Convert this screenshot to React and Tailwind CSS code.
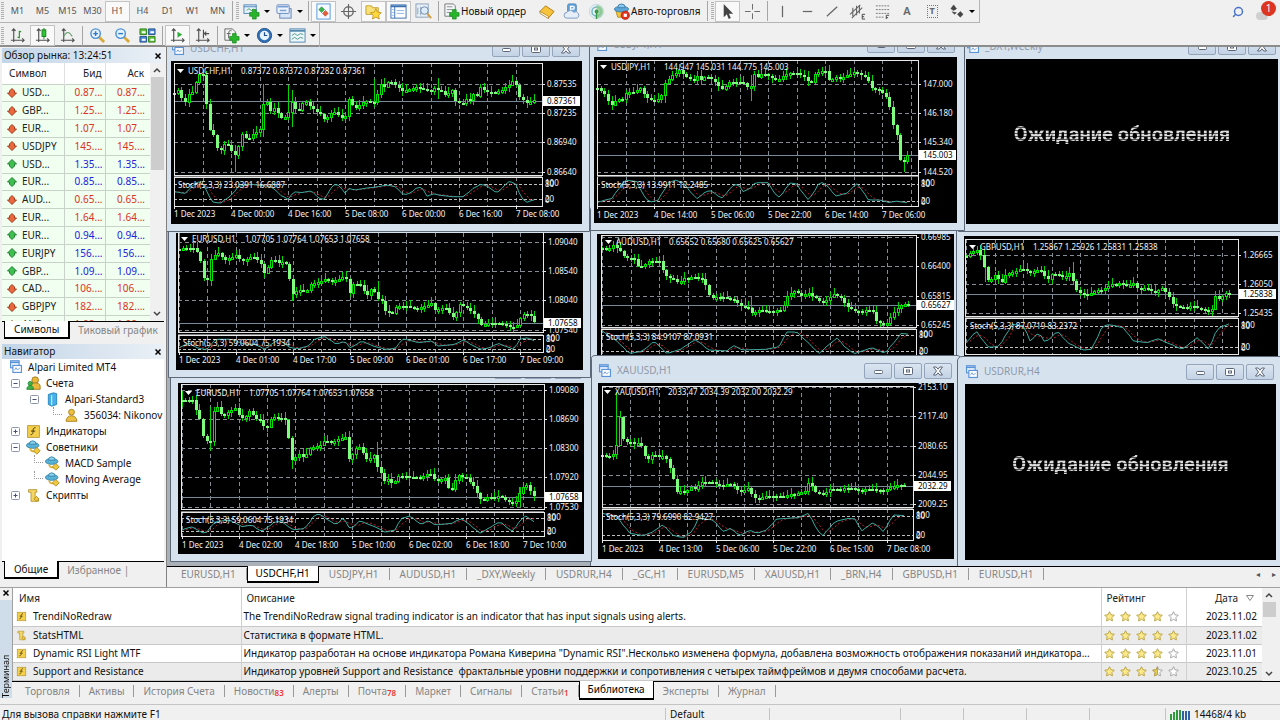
// App.jsx
import React from 'react'
import { Search } from 'lucide-react'

/* ------------------------------------------------------------------ */
/* Data                                                                */
/* ------------------------------------------------------------------ */

const QUOTES = [
  ['USD...', '0.87...', '0.87...', false],
  ['GBP...', '1.25...', '1.25...', false],
  ['EUR...', '1.07...', '1.07...', false],
  ['USDJPY', '145....', '145....', false],
  ['USD...', '1.35...', '1.35...', true],
  ['EUR...', '0.85...', '0.85...', true],
  ['AUD...', '0.65...', '0.65...', false],
  ['EUR...', '1.64...', '1.64...', false],
  ['EUR...', '0.94...', '0.94...', true],
  ['EURJPY', '156....', '156....', true],
  ['GBP...', '1.09...', '1.09...', true],
  ['CAD...', '106....', '106....', false],
  ['GBPJPY', '182....', '182....', false],
  ['AUD...', '1.08...', '1.08...', false],
]

// Chart geometry is stored in plot units: px = (unit - origin) / scale, per axis
const USDCHF = {
  scale: [3, 3], origin: [18, 63], plot: [28, 70, 1130, 405], sub: [410, 497],
  x0: 28, step: 85.4, grid: [[132, '0.87535'], [219, '0.87235'], [307, '0.86940'], [395, '0.86640']],
  price: [182, '0.87361'], levels: [431, 478],
  title: [68, 92, 'USDCHF,H1', '0.87372 0.87372 0.87282 0.87361'],
  stochText: [40, 434, 'Stoch(5,3,3) 23.0391 16.6887'],
  dateY: 521, dates: ['1 Dec 2023', '4 Dec 00:00', '4 Dec 16:00', '5 Dec 08:00', '6 Dec 00:00', '6 Dec 16:00', '7 Dec 08:00'],
  path: '28,160 40,150 50,175 60,185 72,160 85,155 95,115 105,100 115,105 122,120 125,225 135,270 150,290 160,345 175,310 190,315 200,335 210,345 215,365 222,300 232,280 245,300 260,285 275,275 290,262 298,145 305,185 315,215 330,200 345,235 355,235 370,215 378,180 390,205 400,212 412,190 425,185 440,205 455,215 470,225 480,245 492,222 505,215 520,225 535,238 545,220 552,170 562,195 572,205 585,195 600,180 612,185 625,195 630,135 640,175 650,115 660,150 670,120 685,130 700,145 715,155 730,147 755,142 775,148 800,155 805,135 815,170 820,135 835,165 850,160 862,150 872,185 885,190 900,190 905,170 915,180 925,160 935,170 945,140 965,155 990,158 1010,150 1030,135 1045,122 1055,140 1065,175 1080,185 1090,195 1100,180 1110,182',
  spikes: [[210, 320, 395], [295, 132, 290], [370, 135, 225], [380, 150, 260], [627, 118, 200], [820, 115, 178]],
  stoch: '28,455 60,460 90,430 105,425 120,440 140,485 165,490 200,465 220,440 250,432 320,440 345,465 370,478 385,455 410,458 440,452 460,475 480,478 500,440 515,430 540,460 550,445 570,450 600,445 640,440 665,435 690,440 715,465 735,460 760,440 780,450 788,475 800,460 820,465 860,470 895,470 925,445 950,432 970,440 995,460 1015,440 1035,422 1055,435 1070,475 1085,487 1110,478',
}

const USDJPY = {
  scale: [3, 3], origin: [12, 51], plot: [22, 60, 983, 405], sub: [408, 499],
  x0: 22, step: 85.5, grid: [[132, '147.000'], [219, '146.180'], [307, '145.340'], [395, '144.520']],
  price: [345, '145.003'], levels: [431, 482],
  title: [63, 81, 'USDJPY,H1', '144.947 145.031 144.775 145.003'],
  stochText: [34, 434, 'Stoch(5,3,3) 13.9911 12.2485'],
  dateY: 524, dates: ['1 Dec 2023', '4 Dec 14:00', '5 Dec 06:00', '5 Dec 22:00', '6 Dec 14:00', '7 Dec 06:00'],
  path: '22,145 35,155 50,165 58,200 70,190 80,175 95,180 108,158 125,157 140,150 148,140 160,160 175,178 190,182 205,175 215,165 225,130 240,110 255,100 268,90 280,105 295,115 310,120 320,100 325,130 335,115 350,108 365,118 378,130 390,145 402,150 412,125 430,125 450,125 462,130 465,155 475,130 482,140 490,100 500,115 515,100 530,105 545,115 558,122 575,110 595,98 620,100 640,110 655,125 660,138 668,105 685,95 705,90 718,125 735,112 755,115 770,105 795,95 815,105 830,115 845,145 860,148 875,155 890,175 900,205 910,260 918,275 922,300 930,360 940,365 952,345',
  spikes: [[226, 120, 188], [482, 105, 182], [941, 350, 395]],
  stoch: '22,487 65,475 90,440 108,420 140,425 165,475 185,487 205,480 235,430 255,420 285,430 300,455 320,477 340,460 360,450 395,475 430,435 445,433 460,455 480,445 495,428 535,428 550,455 568,472 600,428 620,432 655,482 690,425 710,435 738,468 775,458 800,428 835,480 870,480 900,488 915,483 950,488',
}

const EURUSD_A = {
  scale: [3, 3], origin: [33, 21], plot: [40, 0, 1133, 318], sub: [328, 378],
  x0: 42, step: 85.3, grid: [[48, '1.09040'], [136, '1.08540'], [223, '1.08040'], [312, '1.07540']],
  price: [291, '1.07658'], levels: [340, 369],
  title: [82, 39, 'EURUSD,H1', '1.07705 1.07764 1.07653 1.07658'],
  stochText: [54, 351, 'Stoch(5,3,3) 59.0604 75.1934'],
  dateY: 403, dates: ['1 Dec 2023', '4 Dec 01:00', '4 Dec 17:00', '5 Dec 09:00', '6 Dec 01:00', '6 Dec 17:00', '7 Dec 09:00'],
  path: '43,68 60,65 90,65 105,100 115,155 130,165 138,100 150,85 165,80 175,105 195,95 215,85 228,108 245,100 262,90 285,110 298,140 310,120 322,98 340,110 360,108 370,145 382,205 395,195 410,190 422,205 432,175 450,172 468,165 482,158 500,165 520,160 540,150 550,180 557,218 565,170 585,175 600,200 610,208 622,180 635,218 650,225 652,255 665,255 680,265 695,240 715,240 740,243 755,250 775,240 800,232 812,255 830,245 845,248 860,275 872,268 878,232 895,240 910,250 925,260 935,275 950,300 965,290 1000,290 1020,295 1040,305 1060,295 1068,270 1080,262 1095,265 1105,285 1112,290',
  spikes: [[43, 30, 72], [138, 85, 180], [382, 160, 225], [640, 165, 225]],
  stoch: '43,365 70,350 95,365 125,372 150,340 200,340 240,355 270,355 300,370 340,340 375,365 400,368 430,360 450,338 480,332 515,355 540,345 555,367 590,345 625,360 660,370 690,368 715,338 760,350 800,345 820,360 870,355 895,342 945,370 975,365 1000,352 1045,370 1065,340 1085,335 1110,345',
}

const EURUSD_B = {
  scale: [3, 3], origin: [39, 39], plot: [47, 43, 1136, 417], sub: [425, 497],
  x0: 50, step: 85.3, grid: [[59, '1.09080'], [148, '1.08690'], [235, '1.08300'], [322, '1.07920'], [411, '1.07530']],
  price: [382, '1.07658'], levels: [444, 483],
  title: [92, 68, 'EURUSD,H1', '1.07705 1.07764 1.07653 1.07658'],
  stochText: [62, 449, 'Stoch(5,3,3) 59.0604 75.1934'],
  dateY: 524, dates: ['1 Dec 2023', '4 Dec 02:00', '4 Dec 18:00', '5 Dec 10:00', '6 Dec 02:00', '6 Dec 18:00', '7 Dec 10:00'],
  path: '50,90 65,90 85,90 95,130 105,150 115,205 135,222 138,130 150,120 160,105 170,140 190,125 212,112 225,145 240,140 255,118 270,148 290,150 300,185 315,150 325,140 345,145 358,145 368,190 378,270 395,260 405,248 418,270 428,235 445,230 465,225 480,210 500,218 520,208 540,198 548,250 555,290 565,235 585,232 600,262 612,275 622,240 635,290 648,310 650,340 665,325 685,345 695,318 720,318 750,323 775,318 795,305 800,325 815,330 840,325 850,355 868,360 873,310 890,320 905,325 925,350 940,380 950,395 965,380 990,380 1005,375 1025,395 1045,395 1060,390 1065,355 1085,345 1100,370 1108,382',
  spikes: [[50, 62, 112], [136, 110, 242], [380, 205, 298], [637, 215, 305], [1064, 350, 410]],
  stoch: '50,480 80,470 120,492 150,455 195,450 230,470 260,465 290,485 330,455 350,455 385,480 420,475 445,440 460,430 490,450 515,465 535,440 555,480 585,452 640,475 660,487 690,480 710,445 735,438 770,465 790,450 810,465 860,460 890,445 945,490 1005,455 1040,485 1080,435 1105,455',
}

const AUDUSD = {
  scale: [2.27, 3], origin: [16, 24], plot: [25, 27, 740, 303], sub: [310, 410],
  x0: 28, step: 64.6, grid: [[33, '0.66985'], [120, '0.66400'], [209, '0.65815'], [297, '0.65245']],
  price: [238, '0.65627'], levels: [328, 376],
  title: [58, 48, 'AUDUSD,H1', '0.65652 0.65680 0.65625 0.65627'],
  stochText: [36, 334, 'Stoch(5,3,3) 84.9107 87.0931'],
  dates: [],
  path: '28,65 40,72 50,55 65,70 80,95 100,98 110,122 125,115 135,103 158,105 165,130 175,155 190,158 200,172 210,158 235,152 255,158 268,190 272,218 290,212 310,215 330,222 340,240 360,245 368,262 385,250 405,255 435,252 442,230 450,203 465,195 480,210 495,198 510,215 525,228 540,222 550,203 568,215 580,238 600,255 640,252 650,285 665,295 675,292 685,265 700,245 710,232 725,237',
  spikes: [[366, 213, 262]],
  stoch: '28,315 60,345 90,383 120,375 145,345 175,383 205,370 240,340 270,372 310,375 328,358 345,372 400,370 430,362 445,318 470,318 495,350 520,383 560,335 580,365 600,383 640,365 670,382 690,350 705,322 725,325',
}

const GBPUSD = {
  scale: [2.27, 3], origin: [850, 30], plot: [853, 40, 1472, 269], sub: [277, 385],
  x0: 855, step: 64.6, grid: [[87, '1.26665'], [174, '1.26050'], [262, '1.25435']],
  price: [204, '1.25838'], levels: [300, 364],
  title: [887, 63, 'GBPUSD,H1', '1.25867 1.25926 1.25831 1.25838'],
  stochText: [863, 299, 'Stoch(5,3,3) 87.0719 83.2372'],
  dates: [],
  path: '855,90 865,80 880,70 893,100 897,140 905,168 920,145 935,170 945,145 960,138 980,128 1000,138 1015,130 1030,138 1037,168 1050,140 1062,145 1078,155 1090,140 1100,175 1108,200 1130,208 1145,195 1165,190 1185,175 1205,170 1220,180 1235,172 1245,190 1260,185 1280,200 1300,185 1312,205 1325,238 1345,245 1370,240 1390,250 1410,258 1420,210 1432,225 1440,200 1455,202',
  spikes: [[897, 95, 168], [1098, 108, 178]],
  stoch: '855,350 878,315 905,365 930,360 960,295 985,300 1000,345 1020,320 1035,350 1062,315 1085,350 1120,372 1140,370 1165,300 1180,296 1212,305 1235,345 1265,350 1290,338 1345,370 1380,335 1405,370 1425,308 1455,292',
}

const XAUUSD = {
  scale: [3, 3], origin: [24, 84], plot: [35, 92, 970, 457], sub: [463, 556],
  x0: 36, step: 85.4, grid: [[96, '2153.10'], [184, '2117.40'], [272, '2080.65'], [360, '2044.95'], [448, '2009.25']],
  price: [392, '2032.29'], levels: [482, 540],
  title: [75, 112, 'XAUUSD,H1', '2033.47 2034.39 2032.00 2032.29'],
  stochText: [47, 486, 'Stoch(5,3,3) 79.6990 82.9427'],
  dateY: 582, dates: ['1 Dec 2023', '4 Dec 13:00', '5 Dec 06:00', '5 Dec 22:00', '6 Dec 15:00', '7 Dec 08:00'],
  path: '36,300 50,305 65,298 78,290 82,180 90,185 92,235 105,262 120,260 135,268 150,262 160,290 168,318 180,305 190,295 205,305 225,300 235,335 248,345 252,415 265,408 290,408 300,395 315,402 325,390 335,380 355,382 375,382 380,392 400,390 425,385 440,405 455,410 478,395 487,425 500,432 520,425 550,422 580,422 620,415 645,408 655,385 668,395 678,415 705,415 720,400 740,402 760,400 790,400 805,405 830,402 855,404 885,405 900,397 920,390 945,390',
  spikes: [[79, 110, 300], [495, 405, 445]],
  stoch: '36,475 80,485 120,535 160,542 190,530 220,508 245,540 280,548 305,530 325,490 370,495 400,530 420,520 450,542 480,525 500,535 530,525 560,492 625,488 655,475 695,545 735,500 775,490 795,492 815,528 850,502 880,530 910,480 945,482',
}

// Stacking order: last one is on top
const WINDOWS = [
  { title: 'AUDUSD,H1', chart: AUDUSD, place: 'left-[422px] top-[159px] w-[373px] h-[200px]' },
  { title: 'GBPUSD,H1', chart: GBPUSD, place: 'left-[789px] top-[161px] w-[330px] h-[160px]' },
  { title: '_DXY,Weekly', place: 'left-[791px] top-[-16px] w-[328px] h-[201px]' },
  { title: 'USDJPY,H1', chart: USDJPY, place: 'left-[419px] top-[-18px] w-[379px] h-[202px]' },
  { title: 'XAUUSD,H1', chart: XAUUSD, place: 'left-[423px] top-[308px] w-[372px] h-[212px]' },
  { title: 'USDRUR,H4', place: 'left-[790px] top-[309px] w-[327px] h-[212px]' },
  { title: 'EURUSD,H1', chart: EURUSD_B, place: 'left-[3px] top-[308px] w-[422px] h-[207px]' },
  { title: 'EURUSD,H1', chart: EURUSD_A, place: 'left-[1px] top-[158px] w-[423px] h-[173px]' },
  { title: 'USDCHF,H1', chart: USDCHF, place: 'left-[-4px] top-[-14px] w-[427px] h-[199px]' },
]

const CHART_TABS = ['EURUSD,H1', 'USDCHF,H1', 'USDJPY,H1', 'AUDUSD,H1', '_DXY,Weekly', 'USDRUR,H4', '_GC,H1', 'EURUSD,M5', 'XAUUSD,H1', '_BRN,H4', 'GBPUSD,H1', 'EURUSD,H1']

const LIBRARY = [
  ['TrendiNoRedraw', 'The TrendiNoRedraw signal trading indicator is an indicator that has input signals using alerts.', 4, '2023.11.02', 'fx'],
  ['StatsHTML', 'Статистика в формате HTML.', 5, '2023.11.02', 'script'],
  ['Dynamic RSI Light MTF', 'Индикатор разработан на основе индикатора Романа Киверина "Dynamic RSI".Несколько изменена формула, добавлена возможность отображения показаний индикатора...', 4, '2023.11.01', 'fx'],
  ['Support and Resistance', 'Индикатор уровней Support and Resistance  фрактальные уровни поддержки и сопротивления с четырех таймфреймов и двумя способами расчета.', 3.5, '2023.10.25', 'fx'],
]

const TERMINAL_TABS = [
  ['Торговля'], ['Активы'], ['История Счета'], ['Новости', '83'], ['Алерты'], ['Почта', '78'], ['Маркет'],
  ['Сигналы'], ['Статьи', '1'], ['Библиотека'], ['Эксперты'], ['Журнал'],
]

/* ------------------------------------------------------------------ */
/* Charts                                                              */
/* ------------------------------------------------------------------ */

const parse = (s) => s.split(' ').map((p) => p.split(',').map(Number))

function valueAt(pts, x) {
  if (x <= pts[0][0]) return pts[0][1]
  for (let i = 1; i < pts.length; i++) {
    if (x <= pts[i][0]) {
      const [x1, y1] = pts[i - 1]
      const [x2, y2] = pts[i]
      return y1 + ((y2 - y1) * (x - x1)) / (x2 - x1)
    }
  }
  return pts[pts.length - 1][1]
}

function Chart({ c }) {
  const X = (v) => Math.round((v - c.origin[0]) / c.scale[0])
  const Y = (v) => Math.round((v - c.origin[1]) / c.scale[1])
  const [l, t, r, b] = [X(c.plot[0]), Y(c.plot[1]), X(c.plot[2]), Y(c.plot[3])]
  const [st, sb] = [Y(c.sub[0]), Y(c.sub[1])]

  // Vertical grid
  const cols = []
  for (let x = c.x0; x < c.plot[2] - 4; x += c.step) cols.push(X(x))

  // Candles, eight to a grid column
  const pts = parse(c.path)
  const last = pts[pts.length - 1][0]
  let wicks = ''
  let up = ''
  let down = ''
  let prev = Y(pts[0][1])
  let n = 0
  for (let x = c.x0; x <= last; x += c.step / 8) {
    const close = Y(valueAt(pts, x))
    const hi = Math.min(prev, close) - 1 - ((n * 7) % 6)
    const lo = Math.max(prev, close) + 1 + ((n * 11) % 5)
    const px = X(x)
    wicks += `M${px + 0.5} ${Math.max(hi, t + 1)}V${Math.min(lo, b)}`
    const top = Math.min(prev, close)
    const h = Math.max(2, Math.abs(prev - close))
    if (close < prev) up += `M${px - 0.5} ${top + 0.5}h2v${h}h-2z`
    else down += `M${px - 1} ${top}h3v${h}h-3z`
    prev = close
    n++
  }
  c.spikes.forEach(([x, y1, y2]) => {
    wicks += `M${X(x) + 0.5} ${Y(y1)}V${Y(y2)}`
  })

  // Stochastic: %K solid, %D lags behind it
  const st1 = parse(c.stoch)
  const kLine = []
  const dLine = []
  for (let x = c.x0; x <= last; x += c.step / 8) {
    kLine.push(`${X(x)},${((valueAt(st1, x) - c.origin[1]) / c.scale[1]).toFixed(1)}`)
    const avg = (valueAt(st1, x) + valueAt(st1, x - c.step / 8) + valueAt(st1, x - c.step / 3)) / 3
    dLine.push(`${X(x)},${((avg - c.origin[1]) / c.scale[1]).toFixed(1)}`)
  }

  const priceY = Y(c.price[0])

  return (
    <svg className="block h-full w-full font-['Noto_Sans',sans-serif] text-[8px]" fill="none" shapeRendering="crispEdges">
      <g stroke="#858c94" strokeDasharray="4 3">
        {cols.map((x) => (
          <path key={x} d={`M${x + 0.5} ${t}V${b}M${x + 0.5} ${st}V${sb}`} />
        ))}
        {c.grid.map(([y]) => (
          <path key={y} d={`M${l} ${Y(y) + 0.5}H${r}`} />
        ))}
        {c.levels.map((y) => (
          <path key={y} d={`M${l} ${Y(y) + 0.5}H${r}`} stroke="#c0c0c0" strokeDasharray="3 2" />
        ))}
      </g>
      <path d={`M${l} ${priceY + 0.5}H${r}`} stroke="#778899" />
      <path d={wicks} stroke="#00d800" />
      <path d={up} stroke="#00e400" fill="#000" />
      <path d={down} fill="#7dff7d" />
      <g shapeRendering="auto">
        <polyline points={dLine.join(' ')} stroke="#b3202e" strokeDasharray="2 2" />
        <polyline points={kLine.join(' ')} stroke="#3aa99f" />
      </g>
      <rect x={l + 0.5} y={t + 0.5} width={r - l} height={b - t} stroke="#e8e8e8" />
      <rect x={l + 0.5} y={st + 0.5} width={r - l} height={sb - st} stroke="#e8e8e8" />
      <path d={`M${l} ${(b + st) / 2 + 0.5}H${r}`} stroke="#808080" />

      {/* Captions */}
      <path d={`M${X(c.title[0]) - 11} ${Y(c.title[1]) - 2}h7l-3.5 4z`} fill="#fff" shapeRendering="auto" />
      <g fill="#f4f4f4">
        <text x={X(c.title[0])} y={Y(c.title[1]) + 3}>{c.title[2]}</text>
        <text x={X(c.title[0]) + 53} y={Y(c.title[1]) + 3}>{c.title[3]}</text>
        <text x={X(c.stochText[0])} y={Y(c.stochText[1]) + 3}>{c.stochText[2]}</text>
        {c.grid.map(([y, label]) => (
          <g key={label}>
            <path d={`M${r} ${Y(y) + 0.5}h3`} stroke="#e8e8e8" />
            <text x={r + 5} y={Y(y) + 3}>{label}</text>
          </g>
        ))}
        <text x={r + 3} y={Y(c.levels[0]) + 2}>100</text>
        <text x={r + 3} y={Y(c.levels[0]) + 3}>80</text>
        <text x={r + 3} y={Y(c.levels[1]) + 3}>20</text>
        <text x={r + 3} y={Y(c.levels[1]) + 4}>0</text>
        {c.dates.map((d, i) => (
          <g key={d}>
            <path d={`M${X(c.x0 + i * 2 * c.step) + 0.5} ${sb}v3`} stroke="#e8e8e8" />
            <text x={X(c.x0 + i * 2 * c.step)} y={Y(c.dateY) + 3}>{d}</text>
          </g>
        ))}
      </g>
      <rect x={r + 1} y={priceY - 5} width="37" height="10" fill="#fff" />
      <text x={r + 5} y={priceY + 3} fill="#000">{c.price[1]}</text>
    </svg>
  )
}

function WindowButton({ label, children }) {
  return (
    <button
      type="button"
      aria-label={label}
      className="flex h-4 w-7 items-center justify-center rounded-[2px] border border-[#93a4bb] bg-linear-to-b from-[#dbe5f1] to-[#c3d2e5]"
    >
      <svg width="12" height="10" viewBox="0 0 12 10" fill="#fff" stroke="#5a6577">{children}</svg>
    </button>
  )
}

function ChartWindow({ title, chart, place }) {
  return (
    <section
      className={`absolute ${place} flex flex-col rounded-t-[5px] border border-[#5d6878] bg-[#d7e2ef] px-[7px] pb-[7px]`}
    >
      <header className="flex h-[27px] shrink-0 items-center gap-[2px] pt-[2px] pr-[2px]">
        <ChartIcon />
        <h2 className="ml-[3px] flex-1 text-[10px] text-[#8e99a8]">{title}</h2>
        <WindowButton label="Свернуть"><rect x="2.5" y="4.5" width="8" height="3" rx="1" /></WindowButton>
        <WindowButton label="Развернуть">
          <rect x="1.5" y="1.5" width="9" height="7" rx="1" />
          <rect x="4.5" y="4" width="3" height="2" />
        </WindowButton>
        <WindowButton label="Закрыть">
          <path d="M1.5 1h2.7L6 3.2 7.8 1h2.7L7.5 5l3 4H7.8L6 6.8 4.2 9H1.5l3-4z" />
        </WindowButton>
      </header>
      <div className="min-h-0 flex-1 overflow-hidden bg-black">
        {chart ? (
          <Chart c={chart} />
        ) : (
          <div className="flex h-full items-center justify-center pb-4">
            <p className="bg-[repeating-linear-gradient(#dcdcdc_0_2px,#505050_2px_3px)] bg-clip-text font-[Roboto,sans-serif] text-[20px] font-bold text-transparent">
              Ожидание обновления
            </p>
          </div>
        )}
      </div>
    </section>
  )
}

/* ------------------------------------------------------------------ */
/* Icons                                                               */
/* ------------------------------------------------------------------ */

function Svg({ size = 18, children, className = '' }) {
  return (
    <svg width={size} height={size} viewBox="0 0 18 18" fill="none" className={`shrink-0 ${className}`} aria-hidden="true">
      {children}
    </svg>
  )
}

function ChartIcon() {
  return (
    <Svg size={14}>
      <rect x="2" y="1" width="11" height="9" fill="#e8f2ff" stroke="#5b93d8" strokeWidth="1.5" />
      <path d="M2 3h11" stroke="#5b93d8" strokeWidth="2" />
      <rect x="5" y="7" width="11" height="9" fill="#fff" stroke="#5b93d8" strokeWidth="1.5" />
      <path d="M7 13l2-3 2 3 3-3" stroke="#5b93d8" />
    </Svg>
  )
}

const Plus = () => <path d="M10 7h4v3h3v4h-3v3h-4v-3H7v-4h3z" fill="#27b52b" stroke="#128516" strokeWidth=".7" />
const Axes = () => <path d="M5 2v14M2 14h14M3 4l2-2 2 2M14 12l2 2-2 2" stroke="#505050" strokeWidth="1.2" />

const ICONS = {
  newChart: <><rect x="1" y="2" width="13" height="9" fill="#eaf4ff" stroke="#4d83b9" /><path d="M1 4h13" stroke="#4d83b9" /><path d="M4 8l2-2 3 2 2-2" stroke="#3a9a50" /><Plus /></>,
  profiles: <><rect x="4" y="6" width="12" height="10" fill="#d7e6f7" stroke="#6485b5" /><rect x="1" y="2" width="13" height="9" rx="1" fill="#eef5fd" stroke="#5f86bd" /><path d="M2 4h11M4 8h7" stroke="#7ba0d4" strokeWidth="1.5" /></>,
  market: <><rect x="2" y="1" width="14" height="16" fill="#f4faff" stroke="#5a9bd8" /><path d="M7 4l3 3-3 3-3-3z" fill="#38b54a" stroke="#1f8030" strokeWidth=".6" /><path d="M11 8l3 3-3 3-3-3z" fill="#e8603a" stroke="#a63a1a" strokeWidth=".6" /></>,
  target: <><circle cx="9" cy="9" r="5" stroke="#666" strokeWidth="1.4" /><path d="M9 1v16M1 9h16" stroke="#666" strokeWidth="1.2" /></>,
  navigator: <><path d="M1 3h6l1 2h6v7H1z" fill="#f8e17b" stroke="#c5a02b" /><path d="M11.5 6l1.8 3.7 4 .6-3 2.7.8 4-3.6-2-3.6 2 .8-4-3-2.7 4-.6z" fill="#ffd83c" stroke="#b98a14" strokeWidth=".8" /></>,
  terminal: <><rect x="1" y="2" width="16" height="14" fill="#fff" stroke="#3c6fb0" /><path d="M1 3.5h16" stroke="#3c6fb0" strokeWidth="2" /><path d="M5 4v12" stroke="#3c6fb0" /><path d="M2 7h2M2 10h2M2 13h2M7 8h8M7 11h8" stroke="#8fb4e0" /></>,
  tester: <><rect x="1" y="1" width="13" height="14" fill="#e8eff7" stroke="#8aa0b8" /><path d="M3 12V5M6 13V4" stroke="#8aa0b8" /><circle cx="10" cy="8" r="4" fill="#dcecfa" stroke="#6c89ab" /><path d="M13 11l4 5" stroke="#d69b3c" strokeWidth="2" /></>,
  order: <><path d="M2 1h9l2 2v11H2z" fill="#f4f8fb" stroke="#777" /><path d="M4 4h6M4 7h6M4 10h3" stroke="#8a8a8a" /><Plus /></>,
  book: <><path d="M2 9l6-6 9 6-6 7z" fill="#f6c33b" stroke="#b17a14" /><path d="M2 9l9 5v2.500L2 11z" fill="#fff" stroke="#b17a14" strokeWidth=".8" /></>,
  cloud: <><rect x="5" y="1" width="9" height="9" rx="1.5" fill="#69a9e0" stroke="#4780b8" /><path d="M8 9V3.500h2.500a1.500 1.500 0 010 3H8" stroke="#fff" strokeWidth="1.3" /><path d="M4 16a3 3 0 01.300-6 4 4 0 017-.2A3.200 3.200 0 0115 16z" fill="#e6eef8" stroke="#7e9cc2" /></>,
  signal: <><circle cx="9" cy="9" r="7.5" stroke="#b8d8e8" /><circle cx="9" cy="9" r="4.8" stroke="#6fb7c8" strokeWidth="1.5" /><path d="M9 2a7 7 0 010 14z" fill="#8cc98b" opacity=".8" /><circle cx="9" cy="9" r="2" fill="#3a9a4c" /><path d="M9 10v7" stroke="#3a9a4c" strokeWidth="1.5" /></>,
  auto: <><path d="M3 8h12l-2 7H5z" fill="#f2c640" stroke="#b98b1c" /><ellipse cx="9" cy="6.5" rx="7.5" ry="3" fill="#5ea8d8" stroke="#3a7eac" /><path d="M5 5a4 4 0 018 0z" fill="#8cc8ec" stroke="#3a7eac" /><circle cx="13" cy="13" r="4.5" fill="#e0301e" stroke="#a81e10" strokeWidth=".6" /><rect x="11.3" y="11.3" width="3.4" height="3.4" fill="#fff" /></>,
  cursor: <path d="M5 1v14l3.300-3 2 5 2.200-1-2-4.700H15z" fill="#444" />,
  cross: <path d="M9 1v6M9 11v6M1 9h6M11 9h6" stroke="#666" />,
  vline: <path d="M9 3v12" stroke="#666" strokeWidth="1.3" />,
  hline: <path d="M4 9h10" stroke="#666" strokeWidth="1.3" />,
  tline: <path d="M3 14L14 4" stroke="#666" strokeWidth="1.3" />,
  channel: <><path d="M1 12L12 2M3 16L14 5M4 5v9M8 3v10M11 2v9" stroke="#666" strokeWidth="1.2" /><path d="M17 12h-3v5h3M14 14.500h2" stroke="#444" /></>,
  fibo: <><path d="M2 3h14M2 7h14M2 11h14M2 15h8" stroke="#777" strokeDasharray="2 1" /><path d="M13 17v-4h3M13 15.500h2" stroke="#444" /></>,
  shapes: <path d="M3 6l3-4 3 4-3 2zM4 9l3 3 2-2M10 12l3-3 3 3-3 3z" fill="#444" stroke="#444" strokeWidth=".6" />,
  bars: <><Axes /><path d="M11 4v8M9 11h2M11 5h2" stroke="#2d9a3a" strokeWidth="1.3" /></>,
  candles: <><Axes /><path d="M10.500 1v12" stroke="#128516" /><rect x="8.5" y="3" width="4" height="7" fill="#2fc43a" stroke="#128516" /></>,
  line: <><Axes /><path d="M5 10c3-6 6-5 9 0" stroke="#6b9f73" strokeWidth="1.2" /></>,
  zoomIn: <><path d="M10 10l6 6" stroke="#d9a93c" strokeWidth="3" /><circle cx="7" cy="7" r="5" fill="#e6f3ff" stroke="#4a8fd6" strokeWidth="1.5" /><path d="M4.500 7h5M7 4.500v5" stroke="#2f78c4" strokeWidth="1.5" /></>,
  zoomOut: <><path d="M10 10l6 6" stroke="#d9a93c" strokeWidth="3" /><circle cx="7" cy="7" r="5" fill="#e6f3ff" stroke="#4a8fd6" strokeWidth="1.5" /><path d="M4.500 7h5" stroke="#2f78c4" strokeWidth="1.5" /></>,
  tile: <><path d="M1 2h7v6H1zM10 10h7v6h-7z" fill="#5fbf3c" stroke="#2f7f1c" /><path d="M10 2h7v6h-7zM1 10h7v6H1z" fill="#4a86d0" stroke="#23508a" /><path d="M3 5.500h4M12 5.500h4M3 13.500h4M12 13.500h4" stroke="#fff" strokeWidth="2" /></>,
  scroll: <><Axes /><path d="M9 5l5 3-5 3.500z" fill="#2fae3a" /></>,
  shift: <><Axes /><path d="M10 3v9M16 7h-5M13 5l-2 2 2 2" stroke="#505050" strokeWidth="1.2" /></>,
  indicator: <><path d="M2 2h8l3 3v9H2z" fill="#f4f4f4" stroke="#666" /><path d="M9 4c-3-1-3 2-3 4v4M4 7h4" stroke="#555" /><Plus /></>,
  clock: <><circle cx="9" cy="9" r="7.5" fill="#2f70b8" stroke="#1f4f8a" /><circle cx="9" cy="9" r="5" fill="#eaf4ff" /><path d="M9 5.500V9h3" stroke="#1f4f8a" strokeWidth="1.3" /></>,
  template: <><rect x="1" y="2" width="16" height="14" fill="#eef6fb" stroke="#5287ae" /><path d="M1 4h16" stroke="#5287ae" strokeWidth="2" /><path d="M3 9l3-2 3 2 3-2 3 1M3 13l3-2 3 2 3-2 3 1" stroke="#4a9a80" /></>,
  accounts: <><circle cx="11" cy="5" r="4" fill="#e9b83a" stroke="#9b7414" /><path d="M5 16V12c0-5 12-5 12 0v4z" fill="#e9b83a" stroke="#9b7414" /><circle cx="5" cy="9" r="2.5" fill="#3cb54a" stroke="#21832d" /><path d="M1 16c0-6 8-6 8 0z" fill="#3cb54a" stroke="#21832d" /></>,
  server: <><path d="M4 3l6-2 4 1v13l-6 2-4-2z" fill="#45b1ea" stroke="#1e7cb5" /><path d="M8 4v12" stroke="#bfe6fb" strokeWidth="1.5" /></>,
  person: <><circle cx="9" cy="5" r="3.5" fill="#ecc040" stroke="#a37a18" /><path d="M2.500 16c0-9 13-9 13 0z" fill="#ecc040" stroke="#a37a18" /></>,
  fx: <><rect x="2" y="2" width="14" height="14" fill="#f4cf4b" stroke="#b2902a" /><path d="M11.500 4.500c-3-.5-3 2-3 4s-.5 4.500-3 4.500M6 8.500h5" stroke="#4a3c10" strokeWidth="1.2" /></>,
  advisor: <><ellipse cx="8" cy="6.500" rx="7.5" ry="3.500" fill="#58b1d6" stroke="#2d7fa3" /><path d="M4 5a4 4 0 018 0z" fill="#8fd2ea" stroke="#2d7fa3" /><path d="M5 10c0 4 3 4 6 4" stroke="#d9b13a" strokeWidth="2" /><path d="M13 9l4 4-4 4-4-4z" fill="#f2c93e" stroke="#a9861b" /></>,
  script: <><path d="M3 2h10v3h-2v8h4v3H6v-3V5H3z" fill="#f4d765" stroke="#b2902a" /><path d="M12.500 10l3 3-3 3-3-3z" fill="#f2c93e" stroke="#a9861b" /></>,
}

const Icon = ({ name, size }) => <Svg size={size}>{ICONS[name]}</Svg>

/* ------------------------------------------------------------------ */
/* Toolbars                                                            */
/* ------------------------------------------------------------------ */

const Sep = () => <span className="mx-[2px] h-5 w-px shrink-0 bg-[#a5a5a5]" />
const Grip = () => <span className="mx-px h-[18px] w-[3px] shrink-0 bg-[repeating-linear-gradient(#b0b0b0_0_1px,transparent_1px_2px)]" />
const Caret = () => <span className="h-0 w-0 border-x-[3px] border-t-[3px] border-x-transparent border-t-black" />

function Tool({ name, label, on, children }) {
  return (
    <button
      type="button"
      aria-label={label}
      aria-pressed={on ? true : undefined}
      className={`flex h-[21px] w-[25px] shrink-0 items-center justify-center ${on ? 'border border-[#c4c4c4] bg-[#f9f9f9]' : ''}`}
    >
      {name ? <Icon name={name} size={17} /> : children}
    </button>
  )
}

function MenuTool({ name, label }) {
  return (
    <button type="button" aria-label={label} className="flex h-[21px] w-[33px] shrink-0 items-center justify-center gap-[4px]">
      <Icon name={name} size={17} />
      <Caret />
    </button>
  )
}

function Toolbars() {
  return (
    <div className="relative h-[47px] shrink-0 border-b-2 border-[#8c8c8c] bg-[#f0f0f0]">
      <div className="flex h-[23px] w-[980px] items-center border-r border-b border-[#b4b4b4]">
        <Grip />
        {['M1', 'M5', 'M15', 'M30', 'H1', 'H4', 'D1', 'W1', 'MN'].map((tf) => (
          <button
            key={tf}
            type="button"
            className={`h-[21px] w-[25px] shrink-0 text-[9px] text-[#555] ${tf === 'H1' ? 'border border-[#c4c4c4] bg-[#f9f9f9]' : ''}`}
          >
            {tf}
          </button>
        ))}
        <Sep />
        <Grip />
        <MenuTool name="newChart" label="Новый график" />
        <MenuTool name="profiles" label="Профили" />
        <Sep />
        <Tool name="market" label="Обзор рынка" on />
        <Tool name="target" label="Окно данных" />
        <Tool name="navigator" label="Навигатор" on />
        <Tool name="terminal" label="Терминал" on />
        <Tool name="tester" label="Тестер стратегий" />
        <Sep />
        <button type="button" className="mr-2 flex h-[21px] items-center gap-px pl-[2px] text-[10px] whitespace-nowrap">
          <Icon name="order" size={17} />
          Новый ордер
        </button>
        <Tool name="book" label="MetaEditor" />
        <Tool name="cloud" label="VPS" />
        <Tool name="signal" label="Сигналы" />
        <button type="button" className="mx-1 flex h-[21px] items-center gap-px text-[10px] whitespace-nowrap">
          <Icon name="auto" size={17} />
          Авто-торговля
        </button>
        <Sep />
        <Grip />
        <Tool name="cursor" label="Курсор" on />
        <Tool name="cross" label="Перекрестие" />
        <Sep />
        <Tool name="vline" label="Вертикальная линия" />
        <Tool name="hline" label="Горизонтальная линия" />
        <Tool name="tline" label="Трендовая линия" />
        <Tool name="channel" label="Канал" />
        <Tool name="fibo" label="Фибоначчи" />
        <Tool label="Текст"><span className="text-[11px] font-semibold text-[#666]">A</span></Tool>
        <Tool label="Метка">
          <span className="flex h-[13px] w-[11px] items-center justify-center border border-dotted border-[#777] text-[9px] font-bold text-[#666]">T</span>
        </Tool>
        <MenuTool name="shapes" label="Стрелки" />
      </div>
      <div className="flex h-[24px] w-[320px] items-center border-r border-[#b4b4b4] pt-px">
        <Grip />
        <Tool name="bars" label="Бары" />
        <Tool name="candles" label="Свечи" on />
        <Tool name="line" label="Линия" />
        <Sep />
        <Tool name="zoomIn" label="Увеличить" />
        <Tool name="zoomOut" label="Уменьшить" />
        <Tool name="tile" label="Расположить окна" />
        <Sep />
        <Tool name="scroll" label="Автопрокрутка" on />
        <Tool name="shift" label="Сдвиг графика" />
        <Sep />
        <MenuTool name="indicator" label="Индикаторы" />
        <MenuTool name="clock" label="Периоды" />
        <MenuTool name="template" label="Шаблоны" />
      </div>
      <div className="absolute top-1 right-1 flex items-center gap-3">
        <button type="button" aria-label="Поиск">
          <Search size={12} strokeWidth={3} className="-scale-x-100 text-[#4a74c9]" />
        </button>
        <button type="button" aria-label="Уведомления" className="relative h-4 w-5">
          <span className="absolute bottom-0 left-0 h-2 w-3 rounded-full bg-[#cfcfcf]" />
          <span className="absolute -top-[3px] right-0 flex h-[15px] w-[15px] items-center justify-center rounded-full bg-[#dc3522] text-[10px] text-white">1</span>
        </button>
      </div>
    </div>
  )
}

/* ------------------------------------------------------------------ */
/* Side panels                                                         */
/* ------------------------------------------------------------------ */

function PanelHeader({ children }) {
  return (
    <header className="flex h-[15px] shrink-0 items-center justify-between bg-linear-to-r from-[#c3d5e8] to-[#eaf0f6] px-[2px]">
      <h2 className="text-[10px]">{children}</h2>
      <CloseX />
    </header>
  )
}

function CloseX() {
  return (
    <button type="button" aria-label="Закрыть" className="px-px">
      <svg width="6" height="6" viewBox="0 0 6 6" stroke="#000" strokeWidth="1.5"><path d="M.5.5l5 5M5.500.5l-5 5" /></svg>
    </button>
  )
}

function ScrollBar({ thumb }) {
  return (
    <div className="flex w-[14px] shrink-0 flex-col items-center bg-[#f0f0f0] py-1">
      <svg width="8" height="6" viewBox="0 0 8 6" fill="none" stroke="#444" strokeWidth="1.5"><path d="M1 5l3-3 3 3" /></svg>
      <span className={`mt-1 w-[13px] bg-[#cdcdcd] ${thumb}`} />
      <svg width="8" height="6" viewBox="0 0 8 6" fill="none" stroke="#444" strokeWidth="1.5" className="mt-auto"><path d="M1 1l3 3 3-3" /></svg>
    </div>
  )
}

function PanelTabs({ active, other }) {
  return (
    <div className="flex h-[18px] shrink-0 border-t border-black bg-[#f0f0f0] pl-[2px] text-[10px]">
      <button type="button" className="-mt-px border-r-2 border-b-2 border-l border-black bg-white px-[9px]">{active}</button>
      <button type="button" className="px-2 whitespace-nowrap text-[#858585]">{other}</button>
    </div>
  )
}

function Arrow({ up }) {
  return (
    <svg width="10" height="10" viewBox="0 0 10 10" className={`shrink-0 ${up ? '' : 'rotate-180'}`}>
      <path d="M5 .5L9.500 5H7.500v2L5 9.500 2.500 7V5H.5z" fill={up ? '#3fbf50' : '#e8683f'} stroke={up ? '#1f8030' : '#a63a1a'} />
    </svg>
  )
}

function MarketWatch() {
  return (
    <section className="flex h-[291px] shrink-0 flex-col">
      <PanelHeader>Обзор рынка: 13:24:51</PanelHeader>
      <div className="flex min-h-0 flex-1 overflow-hidden bg-white">
        <div className="min-w-0 flex-1 overflow-hidden">
          <table className="h-[270px] w-full table-fixed border-collapse text-[10px]">
            <thead>
              <tr className="h-[21px] text-[#222]">
                <th className="w-[62px] border-r border-[#e0e0e0] pl-[7px] text-left font-normal">Символ</th>
                <th className="w-[41px] border-r border-[#e0e0e0] pr-[3px] text-right font-normal">Бид</th>
                <th className="pr-[6px] text-right font-normal">Аск</th>
              </tr>
            </thead>
            <tbody>
              {QUOTES.map(([symbol, bid, ask, up], i) => (
                <tr key={i} className={`border-t border-[#c9d2c9] bg-[#f0fff0] ${up ? 'text-[#2222dd]' : 'text-[#dd3322]'}`}>
                  <td className="border-r border-[#c9d2c9] p-0 pl-[5px] text-[#222]">
                    <span className="flex items-center gap-[5px]"><Arrow up={up} />{symbol}</span>
                  </td>
                  <td className="border-r border-[#c9d2c9] p-0 pr-[2px] text-right">{bid}</td>
                  <td className="p-0 pr-[5px] text-right">{ask}</td>
                </tr>
              ))}
            </tbody>
          </table>
        </div>
        <ScrollBar thumb="h-[93px]" />
      </div>
      <PanelTabs active="Символы" other="Тиковый график" />
    </section>
  )
}

function Toggle({ open }) {
  return (
    <svg width="9" height="9" viewBox="0 0 9 9" className="mr-[6px] shrink-0" fill="#fff" stroke="#8c96a8">
      <rect x=".5" y=".5" width="8" height="8" rx="1" />
      <path d={open ? 'M2.500 4.500h4' : 'M2.500 4.500h4M4.500 2.500v4'} stroke="#44506a" />
    </svg>
  )
}

const TREE = [
  { pad: 'pl-[7px]', icon: null, text: 'Alpari Limited MT4' },
  { pad: 'pl-[9px]', open: true, icon: 'accounts', text: 'Счета' },
  { pad: 'pl-[28px]', open: true, icon: 'server', text: 'Alpari-Standard3' },
  { pad: 'pl-[47px]', leaf: true, icon: 'person', text: '356034: Nikonov' },
  { pad: 'pl-[9px]', open: false, icon: 'fx', text: 'Индикаторы' },
  { pad: 'pl-[9px]', open: true, icon: 'advisor', text: 'Советники' },
  { pad: 'pl-[28px]', leaf: true, icon: 'advisor', text: 'MACD Sample' },
  { pad: 'pl-[28px]', leaf: true, icon: 'advisor', text: 'Moving Average' },
  { pad: 'pl-[9px]', open: false, icon: 'script', text: 'Скрипты' },
]

function Navigator() {
  return (
    <section className="flex min-h-0 flex-1 flex-col">
      <PanelHeader>Навигатор</PanelHeader>
      <ul className="min-h-0 flex-1 overflow-hidden bg-white text-[10px]">
        {TREE.map((n) => (
          <li key={n.text} className={`flex h-4 items-center whitespace-nowrap ${n.pad}`}>
            {n.open !== undefined && <Toggle open={n.open} />}
            {n.leaf && <span className="mr-[2px] ml-1 h-2 w-[9px] shrink-0 self-start border-b border-l border-dotted border-[#999]" />}
            {n.icon ? <Icon name={n.icon} size={15} /> : <ChartIcon />}
            <span className="ml-[5px]">{n.text}</span>
          </li>
        ))}
      </ul>
      <PanelTabs active="Общие" other="Избранное   |" />
    </section>
  )
}

/* ------------------------------------------------------------------ */
/* Terminal                                                            */
/* ------------------------------------------------------------------ */

function Stars({ value }) {
  return (
    <span className="flex gap-[5px]" role="img" aria-label={`${value} / 5`}>
      {[1, 2, 3, 4, 5].map((i) => (
        <svg key={i} width="11" height="11" viewBox="0 0 12 12">
          <path
            d="M6 .8l1.600 3.300 3.600.5-2.600 2.600.6 3.600L6 9.100l-3.200 1.700.6-3.600L.8 4.600l3.600-.5z"
            fill={value >= i ? '#fbe98a' : '#fff'}
            stroke={value >= i ? '#b9a03c' : '#a0a0a0'}
          />
          {value === i - 0.5 && <path d="M6 .8v8.300l-3.200 1.700.6-3.600L.8 4.600l3.600-.5z" fill="#e8cf50" stroke="#b9a03c" />}
        </svg>
      ))}
    </span>
  )
}

function Terminal() {
  return (
    <section className="flex h-[115px] shrink-0 border-t border-[#a0a0a0] bg-[#f0f0f0]">
      <div className="flex w-3 shrink-0 flex-col items-center pt-[2px] pb-1">
        <CloseX />
        <h2 className="mt-1 flex-1 rotate-180 bg-[#cfdcea] text-[9px] leading-3 [writing-mode:vertical-rl]">Терминал</h2>
      </div>
      <div className="flex min-w-0 flex-1 flex-col">
        <div className="flex h-[93px] border-l border-[#a0a0a0] bg-white">
          <div className="min-w-0 flex-1 overflow-hidden">
            <table className="w-full table-fixed border-collapse text-[10px] whitespace-nowrap">
              <thead>
                <tr className="h-[20px] text-left text-[#222] [&>th]:font-normal">
                  <th className="w-[228px] border-r border-[#d0d0d0] pl-[6px]">Имя</th>
                  <th className="border-r border-[#d0d0d0] pl-[5px]">Описание</th>
                  <th className="w-[85px] border-r border-[#d0d0d0] pl-[5px]">Рейтинг</th>
                  <th className="w-[76px] pr-2">
                    <span className="flex items-center justify-end gap-2">
                      Дата
                      <svg width="8" height="6" viewBox="0 0 8 6" fill="none" stroke="#888"><path d="M.5.5h7L4 5.500z" /></svg>
                    </span>
                  </th>
                </tr>
              </thead>
              <tbody>
                {LIBRARY.map(([name, text, rating, date, icon]) => (
                  <tr key={name} className="h-[18px] border-b border-[#c8c8c8] even:bg-[#ebebeb]">
                    <td className="border-r border-[#d0d0d0] p-0 pl-[3px]">
                      <span className="flex items-center gap-[6px]"><Icon name={icon} size={11} />{name}</span>
                    </td>
                    <td className="overflow-hidden border-r border-[#d0d0d0] p-0 pl-[2px] whitespace-pre">{text}</td>
                    <td className="border-r border-[#d0d0d0] p-0 pl-[2px]"><Stars value={rating} /></td>
                    <td className="p-0 pr-[5px] text-right">{date}</td>
                  </tr>
                ))}
              </tbody>
            </table>
          </div>
          <ScrollBar thumb="h-[15px]" />
          <span className="w-1 bg-[#f0f0f0]" />
        </div>
        <div className="flex h-[19px] border-t border-black pl-1 text-[10px] text-[#858585]">
          {TERMINAL_TABS.map(([tab, badge]) => (
            <button
              key={tab}
              type="button"
              className={
                tab === 'Библиотека'
                  ? '-mt-px border-x border-b-2 border-black bg-white px-2 text-black'
                  : 'my-[3px] flex items-center border-r border-[#999] px-[9px] leading-3'
              }
            >
              {tab}
              {badge && <sub className="text-[8px] font-semibold text-[#ee3333]">{badge}</sub>}
            </button>
          ))}
        </div>
      </div>
    </section>
  )
}

/* ------------------------------------------------------------------ */

export default function App() {
  return (
    <div className="flex h-screen flex-col overflow-hidden bg-[#f0f0f0] font-['Noto_Sans',sans-serif] text-[#111]">
      <Toolbars />
      <main className="flex min-h-0 flex-1">
        <aside className="flex w-[166px] shrink-0 flex-col gap-[5px] px-[2px] pt-px pb-2">
          <MarketWatch />
          <Navigator />
        </aside>
        <div className="flex min-w-0 flex-1 flex-col border-l border-[#808080]">
          <div className="relative min-h-0 flex-1 overflow-hidden bg-[#a9b0b8]">
            {WINDOWS.map((w, i) => (
              <ChartWindow key={i} {...w} />
            ))}
          </div>
          <nav className="flex h-[21px] shrink-0 items-start border-t border-black pl-1 text-[10px] text-[#858585]">
            {CHART_TABS.map((tab, i) => (
              <button
                key={i}
                type="button"
                className={
                  i === 1
                    ? '-mt-px h-[17px] border-x border-b-2 border-black bg-white px-2 text-black'
                    : 'mt-px border-r border-[#999] px-[10px] leading-3'
                }
              >
                {tab}
              </button>
            ))}
            <span className="mt-[3px] mr-1 ml-auto flex gap-3 text-[8px] leading-2 text-[#555]"><span>◂</span><span>▸</span></span>
          </nav>
        </div>
      </main>
      <Terminal />
      <footer className="mt-[2px] flex h-[16px] shrink-0 items-center border-t border-[#c4c4c4] pt-[3px] pl-[2px] text-[10px] leading-3 [&>span]:border-l [&>span]:border-[#c4c4c4]">
        <p className="flex-1">Для вызова справки нажмите F1</p>
        <span className="w-[104px] pl-1">Default</span>
        <span className="h-3 w-[131px]" />
        <span className="h-3 w-[63px]" />
        <span className="h-3 w-[63px]" />
        <span className="h-3 w-[63px]" />
        <span className="h-3 w-[76px]" />
        <span className="flex w-[115px] items-center gap-1 pl-1">
          <svg width="20" height="11" viewBox="0 0 20 11"><path d="M1 11V5M4 11V3M7 11V1M10 11V1" stroke="#2f9a3c" strokeWidth="2" /><path d="M13 11V2M16 11V2M19 11V2" stroke="#2f5fa8" strokeWidth="2" /></svg>
          14468/4 kb
        </span>
      </footer>
    </div>
  )
}
